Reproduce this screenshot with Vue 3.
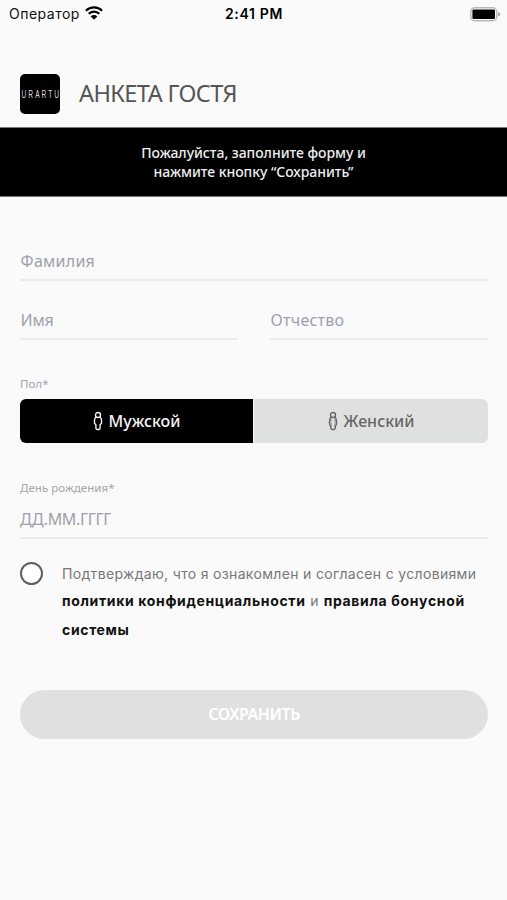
<script setup>
import { ref } from 'vue'

const gender = ref('male')
const agreed = ref(false)
</script>

<template>
  <main class="screen">
    <div class="status">
      <div class="carrier">
        <span class="operator">Оператор</span>
        <svg class="wifi" viewBox="0 0 18 14" width="18" height="14">
          <path d="M.9 4.7a11.5 11.5 0 0 1 16.2 0M3.7 7.8a7.5 7.5 0 0 1 10.6 0" fill="none" stroke="#000" stroke-width="2.2" />
          <path d="M5.7 10.4a4.7 4.7 0 0 1 6.6 0L9 13.7z" fill="#000" />
        </svg>
      </div>
      <span class="time">2:41 PM</span>
      <svg class="battery" viewBox="0 0 31 15" width="31" height="15">
        <rect x=".8" y=".8" width="25.9" height="12.9" rx="3.8" fill="#fff" stroke="#b9b9b9" stroke-width="1.5" />
        <rect x="2.4" y="2.6" width="22.6" height="9.4" rx="1.2" fill="#000" />
        <path d="M28 5v4.6q2.6-.9 2.6-2.3T28 5z" fill="#aaa" />
      </svg>
    </div>

    <header class="header">
      <div class="logo"><span class="logo-text">URARTU</span></div>
      <h1 class="title">АНКЕТА ГОСТЯ</h1>
    </header>

    <div class="banner">
      <span class="banner-first">Пожалуйста, заполните форму и</span>
      <span class="banner-second">нажмите кнопку “Сохранить”</span>
    </div>

    <form class="form" @submit.prevent>
      <div class="field surname"><span>Фамилия</span></div>
      <div class="names">
        <div class="field first-name"><span>Имя</span></div>
        <div class="field patronymic"><span>Отчество</span></div>
      </div>

      <div class="label gender-label"><span>Пол*</span></div>
      <div class="segments">
        <button type="button" class="segment" :class="{ active: gender === 'male' }" @click="gender = 'male'">
          <svg viewBox="0 0 10 20" width="10" height="20" fill="none" stroke="currentColor" stroke-width="1.4">
            <circle cx="5" cy="4" r="2.5" />
            <path d="M3.1 6Q1.5 7 1.5 9.2v3l1.4 1.5v3.4q0 1.4 1.1 1.4h2q1.1 0 1.1-1.4v-3.4l1.4-1.5v-3Q8.500 7 6.900 6" />
          </svg>
          <span class="male-text">Мужской</span>
        </button>
        <button type="button" class="segment" :class="{ active: gender === 'female' }" @click="gender = 'female'">
          <svg viewBox="0 0 10 20" width="10" height="20" fill="none" stroke="currentColor" stroke-width="1.4">
            <circle cx="5" cy="4" r="2.5" />
            <path d="M3 5.600Q1.400 8 1.400 11.500q0 2.500 1.400 4v1.600q0 1.400 1.200 1.400h2q1.200 0 1.200-1.400v-1.600q1.400-1.500 1.400-4Q8.600 8 7 5.600" />
            <path d="M3.200 7.500q-.7 4 0 8M6.800 7.500q.7 4 0 8" stroke-width=".6" />
          </svg>
          <span class="female-text">Женский</span>
        </button>
      </div>

      <div class="label birth-label"><span>День рождения*</span></div>
      <div class="field birth"><span>ДД.ММ.ГГГГ</span></div>

      <div class="consent">
        <button type="button" class="radio" role="checkbox" :aria-checked="agreed" @click="agreed = !agreed"></button>
        <div class="consent-text">
          <div class="line line-one">Подтверждаю, что я ознакомлен и согласен с условиями</div>
          <div class="line line-two"><b>политики конфиденциальности</b> и <b>правила бонусной</b></div>
          <div class="line line-three"><b>системы</b></div>
        </div>
      </div>

      <button class="save"><span>СОХРАНИТЬ</span></button>
    </form>
  </main>
</template>

<style>
body { margin: 0; background: #fafafa; }
</style>

<style scoped>
* { box-sizing: border-box; }
.screen {
  width: 507px;
  height: 900px;
  overflow: hidden;
  background: #fafafa;
  color: #555;
  font-family: "Noto Sans", sans-serif;
  white-space: nowrap;
}
button { border: 0; padding: 0; font: inherit; }
.status {
  height: 28px;
  padding: 0 6px 0 9px;
  display: grid;
  grid-template-columns: 216px 1fr 31px;
  align-items: center;
  font: 14px/28px Inter, sans-serif;
  color: #111;
}
.carrier { display: flex; align-items: center; gap: 5px; }
.wifi { margin-top: -2px; }
.operator { letter-spacing: .5px; }
.time { font-weight: 600; color: #000; letter-spacing: .65px; }
.header { height: 99px; padding: 46px 20px 0; display: flex; gap: 19px; }
.logo {
  width: 40px;
  height: 40px;
  border-radius: 5px;
  background: #000;
  display: flex;
  align-items: center;
  justify-content: center;
  color: #ddd;
  font: 11px/40px "Liberation Sans", sans-serif;
}
.logo-text { flex: none; letter-spacing: 3.4px; margin-right: -3.4px; transform: scaleX(.6); transform-origin: calc(50% - 1.7px) 50%; }
.title { margin: 0; font-size: 23.5px; line-height: 39px; font-weight: 400; letter-spacing: -.6px; }
.banner {
  height: 70px;
  padding-top: 15px;
  display: flex;
  flex-direction: column;
  align-items: center;
  background: #000;
  border-top: 1px solid #777;
  border-bottom: 1px solid #777;
  color: #eee;
  font-size: 14px;
  line-height: 19px;
  font-weight: 500;
  letter-spacing: -.04px;
}
.form { padding: 45px 19px 0 20px; }
.field {
  height: 39px;
  border-bottom: 2px solid #ececee;
  color: #a0a0aa;
  font-size: 16px;
  line-height: 38px;
  letter-spacing: .25px;
}
.first-name { letter-spacing: -.3px; }
.surname, .first-name, .patronymic { text-indent: .6px; }
.names { display: grid; grid-template-columns: 218px 218px; justify-content: space-between; margin-top: 20px; }
.label { color: #a5a5ae; font-size: 11.5px; line-height: 16px; letter-spacing: .05px; }
.gender-label { margin-top: 36px; }
.segments {
  margin-top: 7px;
  height: 44px;
  display: grid;
  grid-template-columns: 233px 234px;
  gap: 1px;
  border-radius: 6px;
  overflow: hidden;
}
.segment {
  display: flex;
  align-items: center;
  justify-content: center;
  gap: 6px;
  background: #dfe1e1;
  color: #666;
  font-size: 16px;
  font-weight: 500;
}
.segment.active { background: #000; color: #f4f4f4; }
.birth-label { margin-top: 37px; }
.birth { height: 43px; line-height: 46px; letter-spacing: -.35px; }
.consent { display: flex; gap: 19px; margin-top: 20px; }
.radio {
  flex: none;
  width: 23px;
  height: 23px;
  margin-top: 3px;
  border: 2px solid #606060;
  border-radius: 50%;
  background: #fff;
}
.consent-text { font: 14px/29px Inter, sans-serif; color: #777; }
.consent-text b { color: #111; font-weight: 700; }
.line-one { line-height: 29px; letter-spacing: .33px; }
.line-two { line-height: 26px; letter-spacing: .65px; }
.line-three { line-height: 31px; letter-spacing: .65px; }
.save {
  display: block;
  width: 468px;
  height: 49px;
  padding-bottom: 2px;
  margin-top: 45px;
  border-radius: 25px;
  background: #dfe1e1;
  color: #fff;
  font-size: 16px;
  font-weight: 600;
  letter-spacing: -.45px;
}
</style>
